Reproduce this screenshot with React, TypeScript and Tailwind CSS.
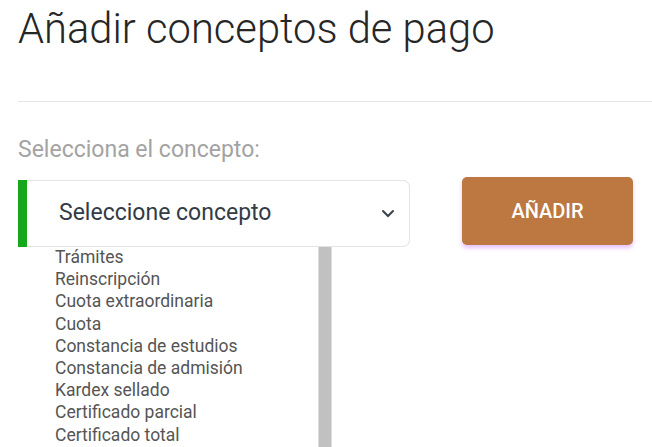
const conceptos = [
  "Trámites",
  "Reinscripción",
  "Cuota extraordinaria",
  "Cuota",
  "Constancia de estudios",
  "Constancia de admisión",
  "Kardex sellado",
  "Certificado parcial",
  "Certificado total",
];

export default function App() {
  return (
    <div className="h-[447px] w-[652px] overflow-hidden bg-white font-['Roboto',sans-serif]">
      <div className="pl-[18px]">
        <h1 className="pt-[3px] text-[41.7px] font-light leading-[52px] text-[#262626]">
          Añadir conceptos de pago
        </h1>
        <hr className="mt-[46px] border-t border-[#e5e5e5]" />

        <p className="mt-[34px] text-[23px] leading-[28px] text-[#a3a3a3]">
          Selecciona el concepto:
        </p>

        <div className="mt-[16px] flex items-start">
          <div className="w-[392px]">
            <div className="flex h-[67px] items-stretch">
              <div className="w-[9px] bg-[#16a81a]" />
              <div className="flex flex-1 items-center justify-between rounded-r-[7px] border border-l-0 border-[#e3e3e3] pl-[32px] pr-[14px]">
                <span className="text-[23px] text-[#333b44]">Seleccione concepto</span>
                <svg width="14" height="9" viewBox="0 0 14 9" fill="none">
                  <path d="M2 2l5 5 5-5" stroke="#3a4149" strokeWidth="2" strokeLinecap="round" />
                </svg>
              </div>
            </div>
            <div className="flex">
              <ul className="mt-[-1px] w-[300px] pl-[37px] text-[17.5px] leading-[22.2px] text-[#555]">
                {conceptos.map((c) => (
                  <li key={c}>{c}</li>
                ))}
              </ul>
              <div className="h-[200px] w-[14px] border-x border-[#dcdcdc] bg-[#c1c1c1]" />
            </div>
          </div>

          <button
            type="button"
            className="ml-[52px] mt-[-3px] flex h-[68px] w-[171px] items-center justify-center rounded-[5px] bg-[#bd7740] text-[20px] font-medium text-white shadow-[0_3px_4px_rgba(200,120,255,0.45)]"
          >
            AÑADIR
          </button>
        </div>
      </div>
    </div>
  );
}
